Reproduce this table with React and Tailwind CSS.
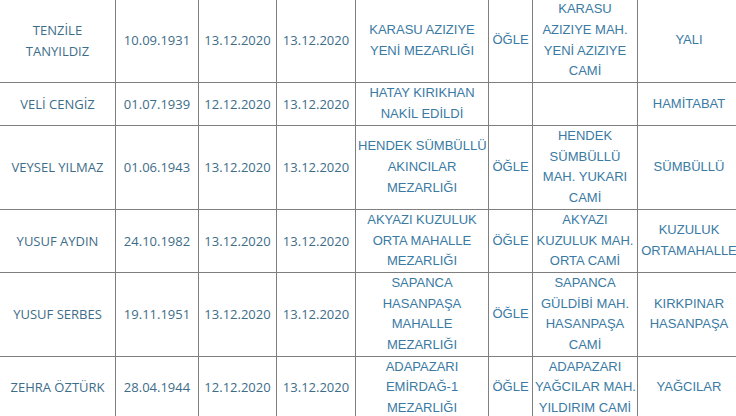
import React from "react";

const rows = [
  {
    h: "h-[84px]",
    name: ["TENZİLE", "TANYILDIZ"],
    birth: "10.09.1931",
    d1: "13.12.2020",
    d2: "13.12.2020",
    cem: ["KARASU AZIZIYE", "YENİ MEZARLIĞI"],
    vakit: "ÖĞLE",
    cami: ["KARASU", "AZIZIYE MAH.", "YENİ AZIZIYE", "CAMİ"],
    mah: ["YALI"],
  },
  {
    h: "h-[43px]",
    name: ["VELİ CENGİZ"],
    birth: "01.07.1939",
    d1: "12.12.2020",
    d2: "13.12.2020",
    cem: ["HATAY KIRIKHAN", "NAKİL EDİLDİ"],
    vakit: "",
    cami: [],
    mah: ["HAMİTABAT"],
  },
  {
    h: "h-[83px]",
    name: ["VEYSEL YILMAZ"],
    birth: "01.06.1943",
    d1: "13.12.2020",
    d2: "13.12.2020",
    cem: ["HENDEK SÜMBÜLLÜ", "AKINCILAR", "MEZARLIĞI"],
    vakit: "ÖĞLE",
    cami: ["HENDEK", "SÜMBÜLLÜ", "MAH. YUKARI", "CAMİ"],
    mah: ["SÜMBÜLLÜ"],
  },
  {
    h: "h-[63px]",
    name: ["YUSUF AYDIN"],
    birth: "24.10.1982",
    d1: "13.12.2020",
    d2: "13.12.2020",
    cem: ["AKYAZI KUZULUK", "ORTA MAHALLE", "MEZARLIĞI"],
    vakit: "ÖĞLE",
    cami: ["AKYAZI", "KUZULUK MAH.", "ORTA CAMİ"],
    mah: ["KUZULUK", "ORTAMAHALLE"],
  },
  {
    h: "h-[83px]",
    name: ["YUSUF SERBES"],
    birth: "19.11.1951",
    d1: "13.12.2020",
    d2: "13.12.2020",
    cem: ["SAPANCA", "HASANPAŞA", "MAHALLE", "MEZARLIĞI"],
    vakit: "ÖĞLE",
    cami: ["SAPANCA", "GÜLDİBİ MAH.", "HASANPAŞA", "CAMİ"],
    mah: ["KIRKPINAR", "HASANPAŞA"],
  },
  {
    h: "h-[63px]",
    name: ["ZEHRA ÖZTÜRK"],
    birth: "28.04.1944",
    d1: "12.12.2020",
    d2: "13.12.2020",
    cem: ["ADAPAZARI", "EMİRDAĞ-1", "MEZARLIĞI"],
    vakit: "ÖĞLE",
    cami: ["ADAPAZARI", "YAĞCILAR MAH.", "YILDIRIM CAMİ"],
    mah: ["YAĞCILAR"],
  },
];

function Lines({ lines }) {
  return (
    <>
      {lines.map((l, i) => (
        <div key={i} className="whitespace-nowrap">
          {l}
        </div>
      ))}
    </>
  );
}

const A =
  "border border-[#7f7f7f] px-[2px] py-0 text-center align-middle text-[13px] leading-[20.7px] text-[#3d6d88] [font-family:'Open_Sans',sans-serif]";
const B =
  "border border-[#7f7f7f] px-[2px] py-0 text-center align-middle text-[13px] leading-[20.7px] text-[#3a7aa3] [font-family:'Liberation_Sans',Arial,sans-serif]";

export default function App() {
  return (
    <div className="w-[736px] h-[416px] overflow-hidden bg-white">
      <table className="-mt-[2px] -ml-[1px] w-[741px] table-fixed border-collapse">
        <colgroup>
          <col className="w-[116px]" />
          <col className="w-[83px]" />
          <col className="w-[78px]" />
          <col className="w-[79px]" />
          <col className="w-[133px]" />
          <col className="w-[44px]" />
          <col className="w-[105px]" />
          <col className="w-[103px]" />
        </colgroup>
        <tbody>
          {rows.map((r, i) => (
            <tr key={i} className={r.h}>
              <td className={A}>
                <Lines lines={r.name} />
              </td>
              <td className={A}>{r.birth}</td>
              <td className={A}>{r.d1}</td>
              <td className={A}>{r.d2}</td>
              <td className={B}>
                <Lines lines={r.cem} />
              </td>
              <td className={B}>{r.vakit}</td>
              <td className={B}>
                <Lines lines={r.cami} />
              </td>
              <td className={B}>
                <Lines lines={r.mah} />
              </td>
            </tr>
          ))}
        </tbody>
      </table>
    </div>
  );
}
